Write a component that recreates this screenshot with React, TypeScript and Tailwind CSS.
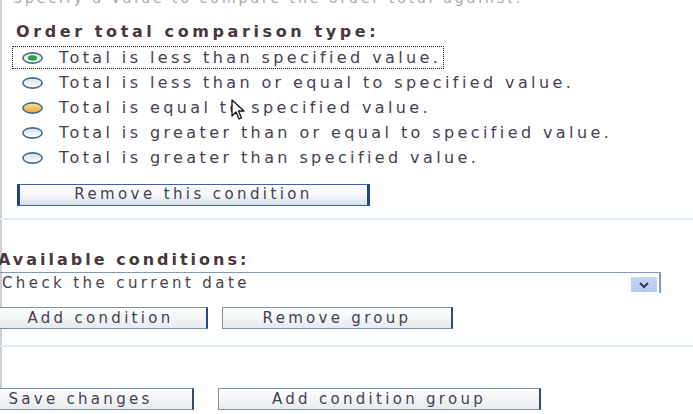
import React from "react";

const options = [
  { label: "Total is less than specified value.", state: "checked" },
  { label: "Total is less than or equal to specified value.", state: "off" },
  { label: "Total is equal to specified value.", state: "hover" },
  { label: "Total is greater than or equal to specified value.", state: "off" },
  { label: "Total is greater than specified value.", state: "off" },
];

function Radio({ state }: { state: string }) {
  return (
    <svg width="21" height="12" viewBox="0 0 21 12" className="shrink-0">
      <defs>
        <linearGradient id="rOff" x1="0" y1="0" x2="0" y2="1">
          <stop offset="0" stopColor="#dadfe3" />
          <stop offset="1" stopColor="#ffffff" />
        </linearGradient>
        <linearGradient id="rHover" x1="0" y1="0" x2="0" y2="1">
          <stop offset="0" stopColor="#fbe29a" />
          <stop offset="1" stopColor="#e9a52e" />
        </linearGradient>
      </defs>
      <ellipse
        cx="10.5"
        cy="6"
        rx="9.6"
        ry="5.1"
        fill={state === "hover" ? "url(#rHover)" : "url(#rOff)"}
        stroke="#43698f"
        strokeWidth="1.6"
      />
      {state === "checked" && <ellipse cx="10.5" cy="6" rx="4.6" ry="2.7" fill="#2f9f3a" />}
    </svg>
  );
}

function Cursor() {
  return (
    <svg width="14" height="22" viewBox="0 0 14 22" className="absolute left-[231px] top-[99px]">
      <path
        d="M1 1 L1 17 L5 13 L8 20 L10.5 19 L7.5 12 L13 12 Z"
        fill="#ffffff"
        stroke="#111111"
        strokeWidth="1.3"
        strokeLinejoin="round"
      />
    </svg>
  );
}

function FormButton({ children, className }: { children: React.ReactNode; className: string }) {
  return (
    <button
      className={
        "h-[22px] shrink-0 border border-[#7f93ad] border-r-2 border-r-[#2d4a74] bg-gradient-to-b from-white to-[#e9eaec] text-[15px] tracking-[3.3px] leading-none text-[#463e52] " +
        className
      }
    >
      {children}
    </button>
  );
}

export default function App() {
  return (
    <div className="relative w-[693px] h-[414px] overflow-hidden bg-white font-['DejaVu_Sans',Verdana,sans-serif] text-[#463e52]">
      <div className="h-full border-l-2 border-[#cfcfcf]">
        <div className="-mt-[9px] pl-[11px] text-[14px] leading-[14px] tracking-[3px] text-[#a7a7a7] whitespace-nowrap">
          Specify a value to compare the order total against.
        </div>

        <div className="mt-[17px] pl-[14px] text-[16px] leading-[20px] font-bold tracking-[3.6px] text-[#47393b] whitespace-nowrap">
          Order total comparison type:
        </div>

        <div className="mt-[3px] flex flex-col">
          {options.map((o, i) => (
            <div key={o.label} className="flex h-[25px] items-center pl-[11px]">
              <div
                className={
                  "flex h-[21px] items-center pl-[9px] " +
                  (i === 0 ? "w-[430px] outline outline-1 outline-dotted outline-[#222]" : "")
                }
              >
                <Radio state={o.state} />
                <span className="ml-[16px] text-[16px] tracking-[3.4px] leading-[20px] whitespace-nowrap">
                  {o.label}
                </span>
              </div>
            </div>
          ))}
        </div>

        <div className="mt-[12px] pl-[15px]">
          <button className="h-[22px] w-[353px] border-y border-y-[#3b66a6] border-x-[3px] border-x-[#1d4684] bg-gradient-to-b from-white via-[#f6f7f9] to-[#d9e1ec] text-[15px] tracking-[3.4px] leading-none text-[#463e52]">
            Remove this condition
          </button>
        </div>

        <div className="mt-[12px] -ml-[2px] h-[2px] bg-[#e1ebf5]" />

        <div className="mt-[30px] -ml-[4px] text-[16px] leading-[20px] font-bold tracking-[3px] text-[#47393b] whitespace-nowrap">
          Available conditions:
        </div>

        <div className="mt-[2px] -ml-[2px] flex h-[21px] w-[661px] items-center border-t border-t-[#7d9bbd] border-r-2 border-r-[#7d9bbd]">
          <span className="flex-1 pl-[2px] text-[15px] tracking-[3.4px] leading-none whitespace-nowrap">
            Check the current date
          </span>
          <span className="mr-[2px] mt-[3px] flex h-[15px] w-[26px] items-center justify-center bg-gradient-to-b from-[#c6d6f7] to-[#b3c7f0]">
            <svg width="12" height="8" viewBox="0 0 12 8">
              <path d="M2 2 L6 6 L10 2" fill="none" stroke="#2f3b52" strokeWidth="2" />
            </svg>
          </span>
        </div>

        <div className="mt-[14px] -ml-[8px] flex gap-[14px]">
          <FormButton className="w-[214px]">Add condition</FormButton>
          <FormButton className="w-[231px]">Remove group</FormButton>
        </div>

        <div className="mt-[16px] -ml-[2px] h-[2px] bg-[#e1ebf5]" />

        <div className="mt-[41px] -ml-[34px] flex gap-[24px]">
          <FormButton className="w-[226px]">Save changes</FormButton>
          <FormButton className="w-[323px]">Add condition group</FormButton>
        </div>
      </div>
      <Cursor />
    </div>
  );
}
